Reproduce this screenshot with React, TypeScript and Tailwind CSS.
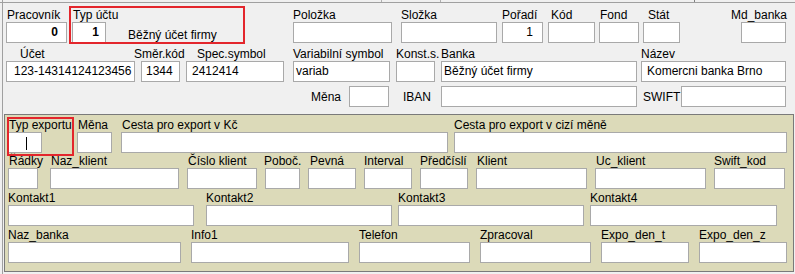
import type { ReactNode } from "react";

type FieldProps = {
  label: string;
  box: string;
  labelCls?: string;
  value?: string;
  valueCls?: string;
  children?: ReactNode;
};

// one label + edit box, as in the old form designer
function Field({ label, box, labelCls = "", value, valueCls = "pl-[4px]", children }: FieldProps) {
  return (
    <div className={`flex shrink-0 flex-col ${box}`}>
      <div className={`h-[13px] whitespace-nowrap leading-[13px] ${labelCls}`}>{label}</div>
      <div
        className={`h-[21px] overflow-hidden whitespace-nowrap border border-[#a9a9a9] bg-white leading-[19px] ${valueCls}`}
      >
        {value}
        {children}
      </div>
    </div>
  );
}

export default function App() {
  return (
    <div className="relative h-[274px] w-[795px] overflow-hidden bg-[#f0f0f0] font-['Liberation_Sans',Arial,sans-serif] text-[12px] text-black shadow-[inset_2px_0_0_#f0f0f0,inset_3px_0_0_#a0a0a0]">
      {/* bottom of the previous grid row */}
      <div className="flex h-[3px] border-b border-[#a0a0a0]">
        <div className="ml-[381px] h-[2px] w-px bg-[#b0b0b0]" />
        <div className="ml-[58px] h-[2px] w-px bg-[#b0b0b0]" />
        <div className="ml-[253px] h-[2px] w-px bg-[#808080]" />
      </div>

      {/* row 1 */}
      <div className="mt-[6px] flex">
        <Field label="Pracovník" box="ml-[6px] w-[61px]" labelCls="pl-[1px]" value="0" valueCls="pr-[8px] text-right font-bold" />
        <Field label="Typ účtu" box="ml-[5px] w-[34px]" labelCls="pl-[1px]" value="1" valueCls="pr-[6px] text-right font-bold" />
        <div className="ml-[22px] w-[165px] shrink-0 whitespace-nowrap pt-[20px] leading-[13px]">Běžný účet firmy</div>
        <Field label="Položka" box="w-[99px]" />
        <Field label="Složka" box="ml-[9px] w-[96px]" />
        <Field label="Pořadí" box="ml-[5px] w-[41px]" value="1" valueCls="pr-[9px] text-right" />
        <Field label="Kód" box="ml-[5px] w-[47px]" labelCls="pl-[3px]" />
        <Field label="Fond" box="ml-[4px] w-[40px]" labelCls="pl-[1px]" />
        <Field label="Stát" box="ml-[4px] w-[37px]" labelCls="pl-[5px]" />
        <Field label="Md_banka" box="ml-[61px] w-[45px]" labelCls="-ml-[10px]" />
      </div>

      {/* row 2 */}
      <div className="mt-[5px] flex">
        <Field label="Účet" box="ml-[6px] w-[129px]" labelCls="pl-[14px]" value="123-14314124123456" valueCls="pl-[7px]" />
        <Field label="Směr.kód" box="ml-[6px] w-[39px]" labelCls="-ml-[7px]" value="1344" valueCls="pl-[4px]" />
        <Field label="Spec.symbol" box="ml-[6px] w-[98px]" labelCls="pl-[11px]" value="2412414" valueCls="pl-[5px]" />
        <Field label="Variabilní symbol" box="ml-[9px] w-[97px]" value="variab" valueCls="pl-[2px]" />
        <Field label="Konst.s." box="ml-[6px] w-[39px]" />
        <Field label="Banka" box="ml-[6px] w-[196px]" value="Běžný účet firmy" valueCls="pl-[2px]" />
        <Field label="Název" box="ml-[4px] w-[145px]" value="Komercni banka Brno" valueCls="pl-[5px]" />
      </div>

      {/* row 3 */}
      <div className="mt-[4px] flex items-center">
        <span className="ml-[311px] w-[38px] shrink-0">Měna</span>
        <div className="h-[21px] w-[40px] shrink-0 border border-[#a9a9a9] bg-white" />
        <span className="ml-[14px] w-[38px] shrink-0">IBAN</span>
        <div className="h-[21px] w-[196px] shrink-0 border border-[#a9a9a9] bg-white" />
        <span className="ml-[6px] w-[38px] shrink-0">SWIFT</span>
        <div className="h-[21px] w-[105px] shrink-0 border border-[#a9a9a9] bg-white" />
      </div>

      {/* export panel */}
      <div className="ml-[4px] mt-[7px] h-[158px] w-[790px] border border-[#7a7a7a] bg-[#dcdab9] pt-[4px]">
        <div className="flex">
          <Field label="Typ exportu" box="ml-[3px] w-[34px]" labelCls="pl-[1px]" valueCls="pl-0">
            <span className="ml-[17px] mt-[4px] inline-block h-[13px] w-px bg-black align-top" />
          </Field>
          <Field label="Měna" box="ml-[35px] w-[35px]" labelCls="pl-[1px]" />
          <Field label="Cesta pro export v Kč" box="ml-[9px] w-[327px]" labelCls="pl-[1px]" />
          <Field label="Cesta pro export v cizí měně" box="ml-[6px] w-[333px]" />
        </div>

        <div className="mt-[2px] flex">
          <Field label="Řádky" box="ml-[3px] w-[30px]" labelCls="pl-[1px]" />
          <Field label="Naz_klient" box="ml-[12px] w-[129px]" labelCls="pl-[1px]" />
          <Field label="Číslo klient" box="ml-[8px] w-[70px]" labelCls="pl-[1px]" />
          <Field label="Poboč." box="ml-[8px] w-[35px]" labelCls="-ml-[1px]" />
          <Field label="Pevná" box="ml-[8px] w-[48px]" labelCls="pl-[2px]" />
          <Field label="Interval" box="ml-[8px] w-[48px]" />
          <Field label="Předčíslí" box="ml-[8px] w-[48px]" />
          <Field label="Klient" box="ml-[8px] w-[111px]" labelCls="pl-[1px]" />
          <Field label="Uc_klient" box="ml-[8px] w-[111px]" labelCls="pl-[1px]" />
          <Field label="Swift_kod" box="ml-[8px] w-[71px]" />
        </div>

        <div className="mt-[3px] flex">
          <Field label="Kontakt1" box="ml-[3px] w-[186px]" />
          <Field label="Kontakt2" box="ml-[12px] w-[186px]" />
          <Field label="Kontakt3" box="ml-[6px] w-[186px]" />
          <Field label="Kontakt4" box="ml-[6px] w-[187px]" />
        </div>

        <div className="mt-[3px] flex">
          <Field label="Naz_banka" box="ml-[3px] w-[173px]" />
          <Field label="Info1" box="ml-[10px] w-[158px]" />
          <Field label="Telefon" box="ml-[10px] w-[111px]" />
          <Field label="Zpracoval" box="ml-[10px] w-[111px]" />
          <Field label="Expo_den_t" box="ml-[10px] w-[88px]" />
          <Field label="Expo_den_z" box="ml-[10px] w-[88px]" />
        </div>
      </div>

      {/* red highlight frames drawn over the form */}
      <div className="absolute left-[69px] top-[6px] h-[38px] w-[176px] border-2 border-[#e3262c]" />
      <div className="absolute left-[7px] top-[117px] h-[39px] w-[67px] border-2 border-[#e3262c]" />
    </div>
  );
}
